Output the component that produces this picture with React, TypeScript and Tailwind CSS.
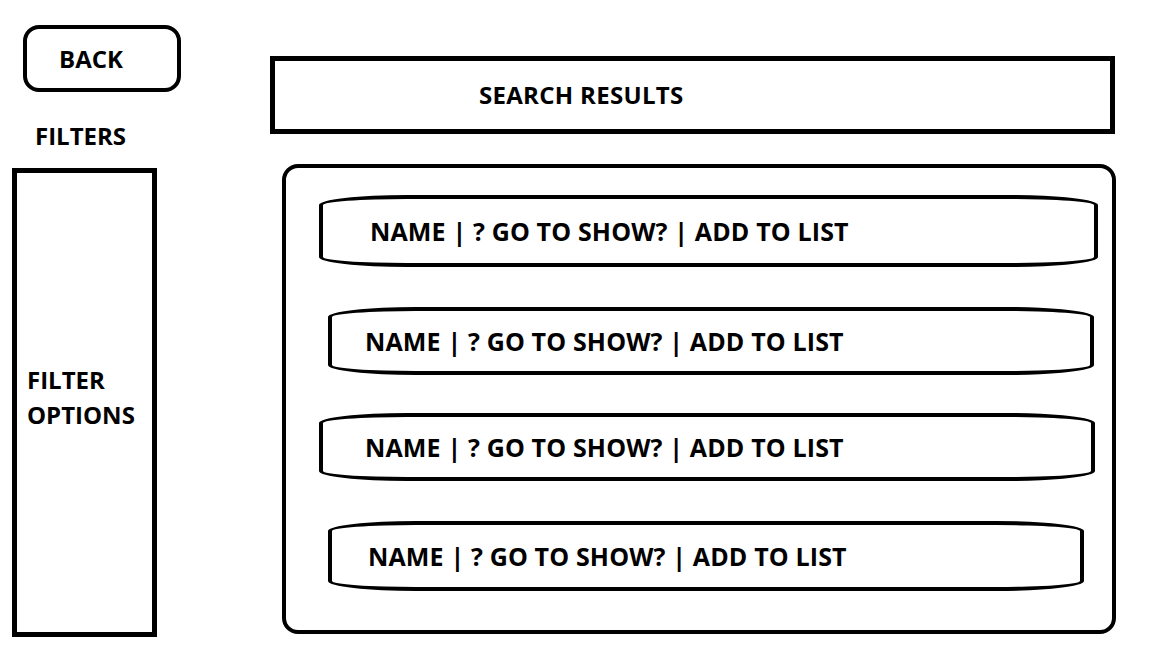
const rows = [
  { box: "ml-[33px] mt-[27px] w-[779px] h-[72px] pl-[47px]" },
  { box: "ml-[42px] mt-[40px] w-[766px] h-[68px] pl-[33px]" },
  { box: "ml-[33px] mt-[38px] w-[776px] h-[68px] pl-[42px]" },
  { box: "ml-[42px] mt-[40px] w-[756px] h-[70px] pl-[36px]" },
];

export default function App() {
  return (
    <div className="w-[1152px] h-[648px] bg-white text-black font-bold text-[24px] leading-none flex font-['Open_Sans',sans-serif] overflow-hidden">
      {/* left column */}
      <div className="ml-[12px] w-[145px] flex flex-col">
        <button className="ml-[11px] mt-[25px] w-[158px] h-[67px] border-4 border-black rounded-[16px] flex items-center pl-[32px] font-bold">
          BACK
        </button>
        <div className="ml-[23px] mt-[32px] h-[24px]">FILTERS</div>
        <div className="mt-[20px] w-[145px] h-[469px] border-[5px] border-black pl-[10px] pt-[189px] leading-[35px]">
          FILTER
          <br />
          OPTIONS
        </div>
      </div>

      {/* right column */}
      <div className="ml-[113px] w-[845px] flex flex-col">
        <div className="mt-[56px] h-[78px] border-[5px] border-black flex items-center pl-[204px] tracking-[0.3px]">
          SEARCH RESULTS
        </div>
        <div className="ml-[12px] mt-[30px] w-[834px] h-[470px] border-4 border-black rounded-[16px] flex flex-col">
          {rows.map((r, i) => (
            <div
              key={i}
              className={`${r.box} border-[4.5px] border-black rounded-[88px/10px] flex items-center text-[25px] tracking-[0.15px]`}
            >
              NAME | ? GO TO SHOW? | ADD TO LIST
            </div>
          ))}
        </div>
      </div>
    </div>
  );
}
